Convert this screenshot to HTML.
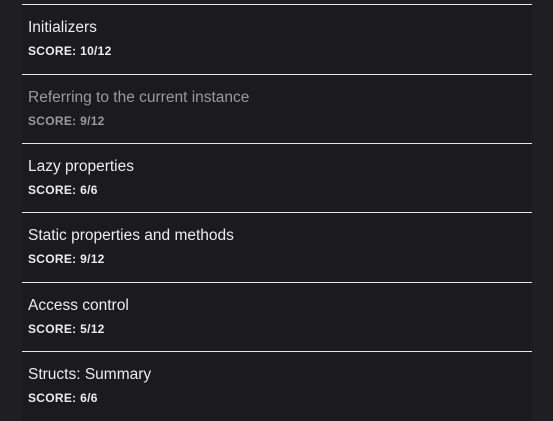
<html><head><style>
html,body{margin:0;background:#1f1f21;width:553px;height:421px;overflow:hidden;font-family:"Liberation Sans",sans-serif;position:relative}
.r{position:absolute;left:22px;width:510px;height:69px;background:#1b1b1d;border-top:1px solid #e6e6e6}
.t{position:absolute;left:6px;top:14px;font-size:15.5px;color:#ececec}
.s{position:absolute;left:6px;top:39px;font-size:12px;font-weight:bold;color:#ececec;letter-spacing:0.3px}
.d .t,.d .s{color:#9a9a9c}
</style></head><body>
<div class="r" style="top:4px"><div class="t">Initializers</div><div class="s">SCORE: 10/12</div></div>
<div class="r d" style="top:74px"><div class="t">Referring to the current instance</div><div class="s">SCORE: 9/12</div></div>
<div class="r" style="top:143px"><div class="t">Lazy properties</div><div class="s">SCORE: 6/6</div></div>
<div class="r" style="top:212px"><div class="t">Static properties and methods</div><div class="s">SCORE: 9/12</div></div>
<div class="r" style="top:282px"><div class="t">Access control</div><div class="s">SCORE: 5/12</div></div>
<div class="r" style="top:351px"><div class="t">Structs: Summary</div><div class="s">SCORE: 6/6</div></div>
</body></html>
